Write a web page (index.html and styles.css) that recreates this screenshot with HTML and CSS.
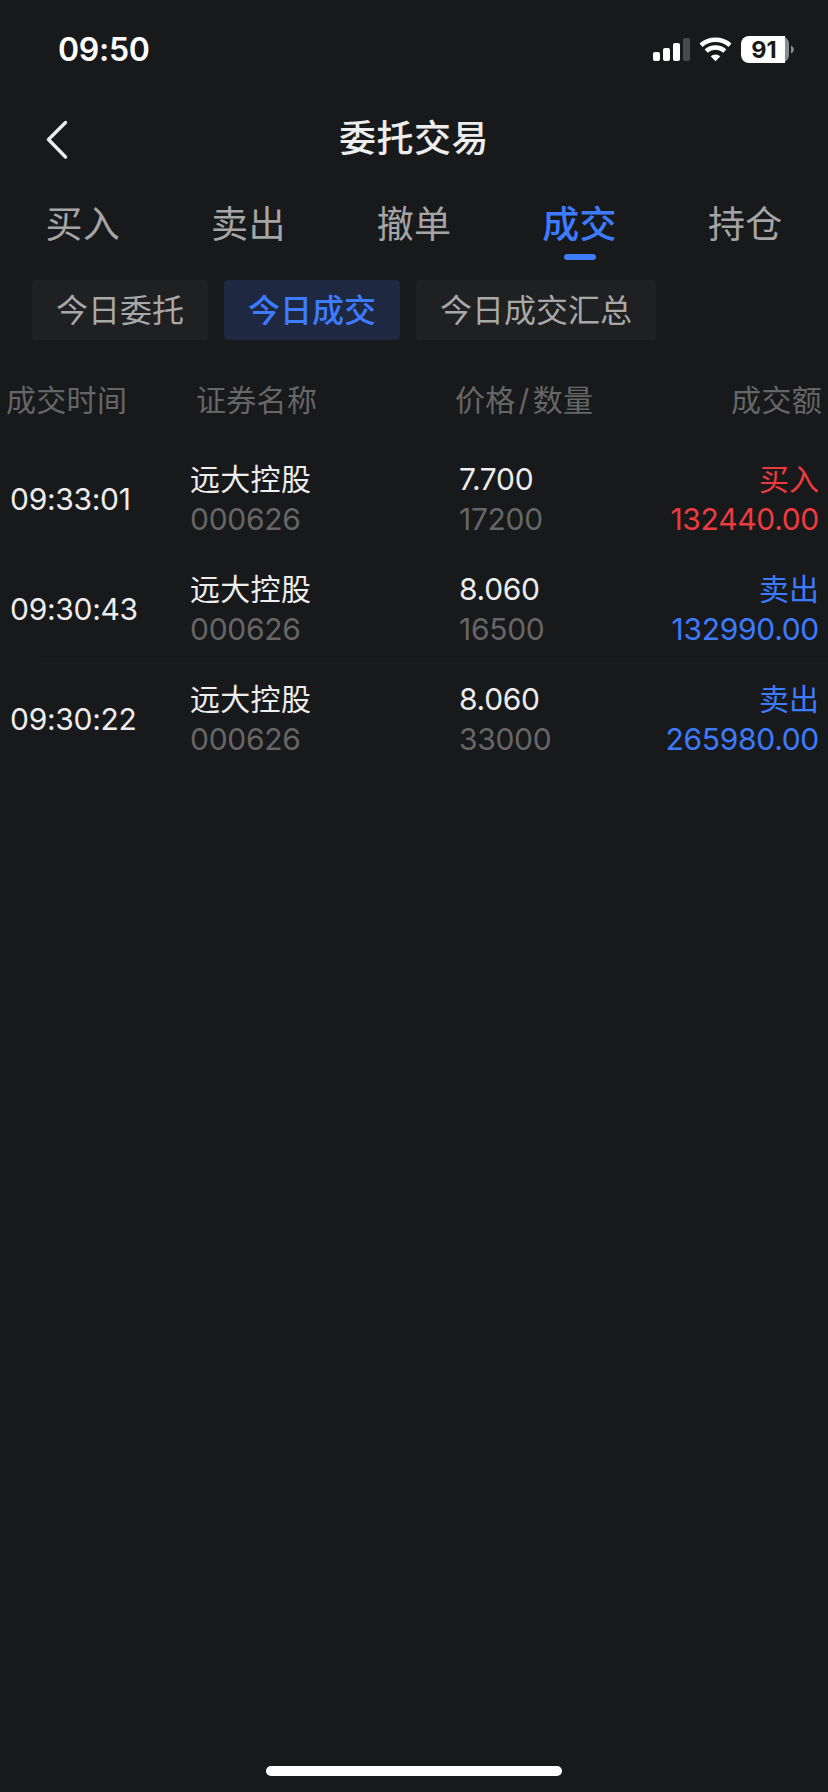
FILE: index.html
```html
<!DOCTYPE html>
<html lang="zh-CN">
<head>
<meta charset="utf-8">
<title>委托交易</title>
<link rel="stylesheet" href="styles.css">
</head>
<body>
<div class="screen">
  <header class="status">
    <span class="clock">09:50</span>
    <svg class="status-icons" width="144" height="30" viewBox="0 0 144 30">
      <g fill="#fff">
        <rect x="1" y="17" width="7" height="9" rx="2"/>
        <rect x="11" y="13" width="7" height="13" rx="2"/>
        <rect x="21" y="8" width="7" height="18" rx="2"/>
        <rect x="31" y="3" width="7" height="23" rx="2" fill="#48494b"/>
      </g>
      <g fill="none" stroke="#fff" stroke-width="4.6">
        <path d="M49 10.2A22.2 22.2 0 0 1 78 10.2"/>
        <path d="M54.2 16.1A13.8 13.8 0 0 1 72.800 16.1"/>
      </g>
      <path d="M58.700 21.300A7.300 7.300 0 0 1 68.300 21.300L63.500 26.200Z" fill="#fff"/>
      <path d="M97 1H128A8 8 0 0 1 137 9V20A8 8 0 0 1 128 28H97Z" fill="#8b8c8d"/>
      <path d="M97 1H133V28H97A8 8 0 0 1 89 20V9A8 8 0 0 1 97 1Z" fill="#fff"/>
      <path d="M139 10.500Q142 12 142 14.500T139 18.500Z" fill="#8b8c8d"/>
      <text class="battery" x="112" y="22.500" text-anchor="middle">91</text>
    </svg>
  </header>
  <nav class="navbar">
    <svg class="back" width="28" height="44" viewBox="0 0 28 44"><path d="M21.500 4.500L4.500 21.500L21.500 39" fill="none" stroke="#ededed" stroke-width="3.400" stroke-linecap="round" stroke-linejoin="round"/></svg>
    <h1 class="title">委托交易</h1>
  </nav>
  <div class="tabs">
    <span class="tab">买入</span><span class="tab">卖出</span><span class="tab">撤单</span><span class="tab tab-active">成交</span><span class="tab">持仓</span>
  </div>
  <div class="chips">
    <span class="chip">今日委托</span><span class="chip chip-active">今日成交</span><span class="chip">今日成交汇总</span>
  </div>
  <div class="head">
    <span>成交时间</span><span>证券名称</span><span>价格<i class="slash">/</i>数量</span><span class="right">成交额</span>
  </div>
  <main class="list">
    <div class="row">
      <span class="num">09:33:01</span>
      <div class="cell"><span class="name">远大控股</span><span class="num muted">000626</span></div>
      <div class="cell"><span class="num">7.700</span><span class="num muted">17200</span></div>
      <div class="cell right buy"><span>买入</span><span class="num">132440.00</span></div>
    </div>
    <div class="row">
      <span class="num">09:30:43</span>
      <div class="cell"><span class="name">远大控股</span><span class="num muted">000626</span></div>
      <div class="cell"><span class="num">8.060</span><span class="num muted">16500</span></div>
      <div class="cell right sell"><span>卖出</span><span class="num">132990.00</span></div>
    </div>
    <div class="row">
      <span class="num">09:30:22</span>
      <div class="cell"><span class="name">远大控股</span><span class="num muted">000626</span></div>
      <div class="cell"><span class="num">8.060</span><span class="num muted">33000</span></div>
      <div class="cell right sell"><span>卖出</span><span class="num">265980.00</span></div>
    </div>
  </main>
  <footer class="home"><div class="home-bar"></div></footer>
</div>
</body>
</html>
```
FILE: styles.css
```css
* { box-sizing: border-box; }
body { margin: 0; background: #18191b; }
.screen {
  display: flex;
  flex-direction: column;
  width: 828px;
  height: 1792px;
  background: #18191b;
  color: #ededed;
  font-family: Inter, "Noto Sans CJK SC", sans-serif;
  font-size: 30px;
  white-space: nowrap;
}
.status {
  display: flex;
  justify-content: space-between;
  align-items: center;
  height: 96px;
  padding: 4px 32px 0 58px;
}
.clock { color: #fff; font-size: 32px; font-weight: 600; line-height: 40px; letter-spacing: -.3px; }
.battery { font-size: 23.5px; font-weight: 700; fill: #18191b; }
.navbar {
  display: grid;
  grid-template-columns: 100px 1fr 100px;
  align-items: center;
  height: 84px;
  padding-top: 2px;
}
.back { margin-left: 44px; margin-top: 2px; }
.title { margin: 0; text-align: center; font-size: 37px; font-weight: 500; line-height: 48px; letter-spacing: .5px; }
.tabs { display: grid; grid-template-columns: repeat(5, 1fr); height: 80px; padding-top: 20px; }
.tab {
  display: flex;
  flex-direction: column;
  align-items: center;
  gap: 4px;
  color: #a5a5a5;
  font-size: 37px;
  line-height: 50px;
  letter-spacing: .3px;
}
.tab-active { color: #3d7bff; font-weight: 500; }
.tab-active::after { content: ""; width: 32px; height: 6px; border-radius: 3px; background: #3d7bff; }
.chips { display: flex; gap: 16px; margin-top: 20px; padding: 0 32px; }
.chip {
  height: 60px;
  padding: 1px 24px 0;
  border-radius: 4px;
  background: #1f2022;
  color: #a8a8a8;
  font-size: 32px;
  line-height: 60px;
}
.chip-active { background: #1e2840; color: #3d7bff; font-weight: 500; }
.head {
  display: grid;
  grid-template-columns: 190px 259px 1fr auto;
  height: 104px;
  padding: 16px 6px 0 6px;
  color: #666;
  line-height: 88px;
  letter-spacing: .3px;
}
.slash { font-style: normal; padding: 0 3px; }
.right { text-align: right; }
.row {
  position: relative;
  display: grid;
  grid-template-columns: 180px 269px 1fr auto;
  align-items: center;
  height: 110px;
  padding: 0 9px 0 10px;
}
.row + .row::before { content: ""; position: absolute; top: -1px; left: 40px; right: 0; height: 1px; background: #1b1c1e; }
.cell { display: flex; flex-direction: column; line-height: 40px; }
.num { line-height: 40px; letter-spacing: -.3px; }
.name { letter-spacing: .3px; }
.muted { color: #666; }
.buy { color: #ee3b3f; }
.sell { color: #3d7bff; }
.home { display: flex; justify-content: center; margin-top: auto; padding-bottom: 16px; }
.home-bar { width: 296px; height: 10px; border-radius: 5px; background: #fff; }
```
